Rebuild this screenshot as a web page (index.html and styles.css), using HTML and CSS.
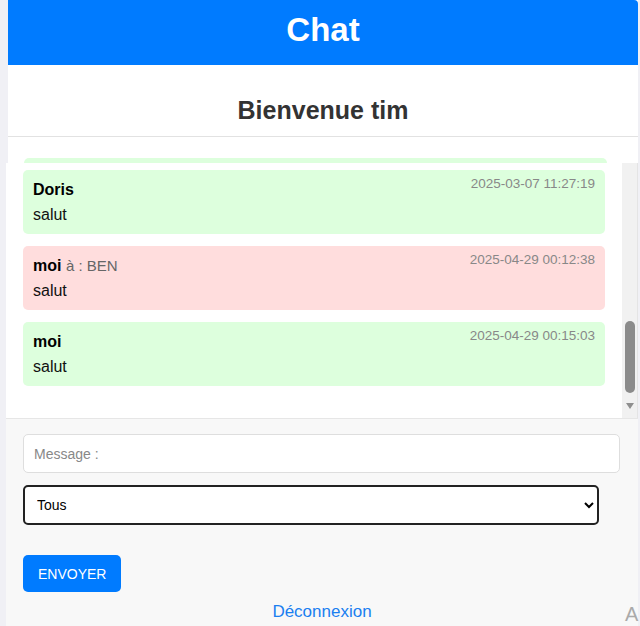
FILE: index.html
```html
<!DOCTYPE html>
<html lang="fr">
<head>
<meta charset="utf-8">
<title>Chat</title>
<link rel="stylesheet" href="styles.css">
</head>
<body>
<div class="page">
  <div class="container">
    <header class="header">Chat</header>
    <section class="welcome"><h2>Bienvenue tim</h2></section>
    <div class="peek"><div class="peek-bar"></div></div>
  </div>
  <div class="lower">
    <div class="messages-wrap">
      <div class="messages">
        <div class="msg msg-green">
          <span class="time">2025-03-07 11:27:19</span>
          <div class="author">Doris</div>
          <div class="text">salut</div>
        </div>
        <div class="msg msg-red">
          <span class="time">2025-04-29 00:12:38</span>
          <div class="author">moi <span class="to">à : BEN</span></div>
          <div class="text">salut</div>
        </div>
        <div class="msg msg-green">
          <span class="time">2025-04-29 00:15:03</span>
          <div class="author">moi</div>
          <div class="text">salut</div>
        </div>
      </div>
      <div class="scrolltrack">
        <div class="thumb"></div>
        <div class="arrow"></div>
      </div>
    </div>
    <form class="form">
      <input class="input" type="text" placeholder="Message :">
      <select class="select"><option>Tous</option></select>
      <button class="btn" type="button">ENVOYER</button>
      <a class="logout" href="#">Déconnexion</a>
    </form>
  </div>
  <span class="corner-a">A</span>
</div>
</body>
</html>
```

FILE: styles.css
```css
* { box-sizing: border-box; }
html, body { margin: 0; padding: 0; }
body {
  background: #f0f0f5;
  font-family: "Liberation Sans", Arial, sans-serif;
  height: 626px;
  overflow: hidden;
}
.page {
  position: relative;
  width: 640px;
  height: 626px;
  overflow: hidden;
}
.container {
  margin-left: 8px;
  width: 630px;
  background: #fff;
}
.header {
  height: 65px;
  background: #007bff;
  color: #fff;
  font-weight: bold;
  font-size: 33px;
  line-height: 38px;
  padding-top: 11px;
  text-align: center;
  border-top-right-radius: 4px;
}
.welcome {
  height: 72px;
  border-bottom: 1px solid #e2e2e2;
  padding-top: 31px;
  text-align: center;
}
.welcome h2 {
  margin: 0;
  font-size: 25px;
  line-height: 29px;
  color: #333;
  font-weight: bold;
}
.peek {
  height: 26px;
  padding-top: 21px;
  padding-left: 16px;
}
.peek-bar {
  width: 583px;
  height: 5px;
  background: #dfd;
  border-radius: 5px 5px 0 0;
}
.lower {
  margin-left: 6px;
  width: 632px;
  background: #f8f8f8;
}
.messages-wrap {
  display: flex;
  height: 256px;
  background: #fff;
  border-bottom: 1px solid #e6e6e6;
}
.messages {
  flex: 1;
  padding: 7px 17px 0 17px;
  display: flex;
  flex-direction: column;
  gap: 12px;
}
.msg {
  position: relative;
  height: 64px;
  padding: 10px;
  border-radius: 5px;
  color: #000;
}
.msg-green { background: #dfd; }
.msg-red { background: #fdd; }
.time {
  float: right;
  margin-top: -4px;
  font-size: 13.5px;
  line-height: 16px;
  color: #888;
}
.author {
  font-weight: bold;
  font-size: 16px;
  line-height: 19px;
  margin-bottom: 6px;
}
.to {
  font-weight: normal;
  font-size: 15px;
  color: #666;
}
.text {
  font-size: 16px;
  line-height: 19px;
  color: #111;
}
.scrolltrack {
  width: 16px;
  background: #f1f1f1;
  border-right: 1px solid #e4e4e4;
  display: flex;
  flex-direction: column;
  align-items: center;
}
.thumb {
  margin-top: 158px;
  width: 10px;
  height: 72px;
  border-radius: 5px;
  background: #8b8b8b;
}
.arrow {
  margin-top: 10px;
  width: 0;
  height: 0;
  border-left: 4.5px solid transparent;
  border-right: 4.5px solid transparent;
  border-top: 6px solid #8f8f8f;
}
.form {
  margin: 0;
  padding: 15px 17px 0 17px;
  height: 207px;
  display: flex;
  flex-direction: column;
  align-items: flex-start;
}
.input {
  width: 597px;
  height: 39px;
  border: 1px solid #dedede;
  border-radius: 5px;
  background: #fff;
  padding: 0 10px;
  font-family: "Liberation Sans", Arial, sans-serif;
  font-size: 14px;
  color: #333;
  outline: none;
}
.input::placeholder { color: #888; }
.select {
  margin-top: 12px;
  width: 576px;
  height: 40px;
  border: 2px solid #222;
  border-radius: 5px;
  background: #fff;
  padding: 0 8px;
  font-family: "Liberation Sans", Arial, sans-serif;
  font-size: 14px;
  color: #000;
}
.btn {
  margin-top: 30px;
  height: 37px;
  padding: 0 15px;
  border: none;
  border-radius: 5px;
  background: #007bff;
  color: #fff;
  font-family: "Liberation Sans", Arial, sans-serif;
  font-size: 14px;
}
.logout {
  align-self: center;
  margin-top: 10px;
  font-size: 17px;
  line-height: 20px;
  color: #1a7ff0;
  text-decoration: none;
}
.corner-a {
  position: absolute;
  left: 625px;
  top: 603px;
  font-size: 20px;
  line-height: 23px;
  color: #aaa;
}
```
